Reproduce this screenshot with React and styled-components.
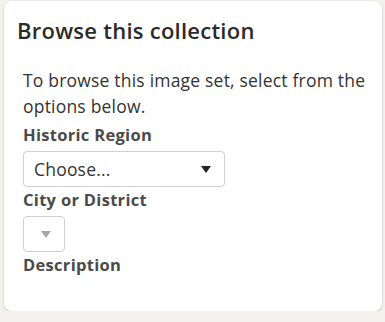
import React from "react";
import styled, { createGlobalStyle } from "styled-components";

const GlobalStyle = createGlobalStyle`
  body {
    margin: 0;
    background: #f3f2ee;
    font-family: "Open Sans", "Liberation Sans", sans-serif;
    color: #333;
  }
`;

const Card = styled.section`
  box-sizing: border-box;
  width: 378px;
  height: 310px;
  margin: 1px 0 0 4px;
  padding: 15px 13px 0;
  background: #fff;
  border-radius: 8px;
  box-shadow: 0 1px 3px rgba(0, 0, 0, 0.18);
`;

const Title = styled.h2`
  margin: 0;
  font-size: 22px;
  line-height: 28px;
  font-weight: 600;
  color: #2b2b2b;
  letter-spacing: 0.25px;
`;

const Body = styled.div`
  padding: 23px 0 0 6px;
  display: flex;
  flex-direction: column;
  align-items: flex-start;
`;

const Intro = styled.p`
  margin: 0 0 4px;
  font-size: 17.5px;
  line-height: 26px;
  color: #333;
  letter-spacing: 0.2px;
`;

const Label = styled.label`
  font-size: 16.5px;
  line-height: 24px;
  font-weight: 700;
  color: #4a4a4a;
  letter-spacing: 0.3px;
`;

const Select = styled.div`
  box-sizing: border-box;
  width: ${(p) => p.$width}px;
  height: 36px;
  margin: 4px 0 1px;
  padding: 0 13px 0 10px;
  display: flex;
  align-items: center;
  justify-content: ${(p) => (p.$empty ? "flex-end" : "space-between")};
  border: 1px solid #d0d0d0;
  border-radius: 4px;
  background: #fff;
  font-size: 17.5px;
  letter-spacing: 0.2px;
  color: #333;
`;

const Caret = styled.span`
  width: 0;
  height: 0;
  border-left: 5px solid transparent;
  border-right: 5px solid transparent;
  border-top: 7px solid ${(p) => (p.$muted ? "#a8a8a8" : "#222")};
`;

export default function App() {
  return (
    <>
      <GlobalStyle />
      <Card>
        <Title>Browse this collection</Title>
        <Body>
          <Intro>To browse this image set, select from the options below.</Intro>
          <Label>Historic Region</Label>
          <Select $width={202}>
            <span>Choose...</span>
            <Caret />
          </Select>
          <Label>City or District</Label>
          <Select $width={42} $empty>
            <Caret $muted />
          </Select>
          <Label>Description</Label>
        </Body>
      </Card>
    </>
  );
}
